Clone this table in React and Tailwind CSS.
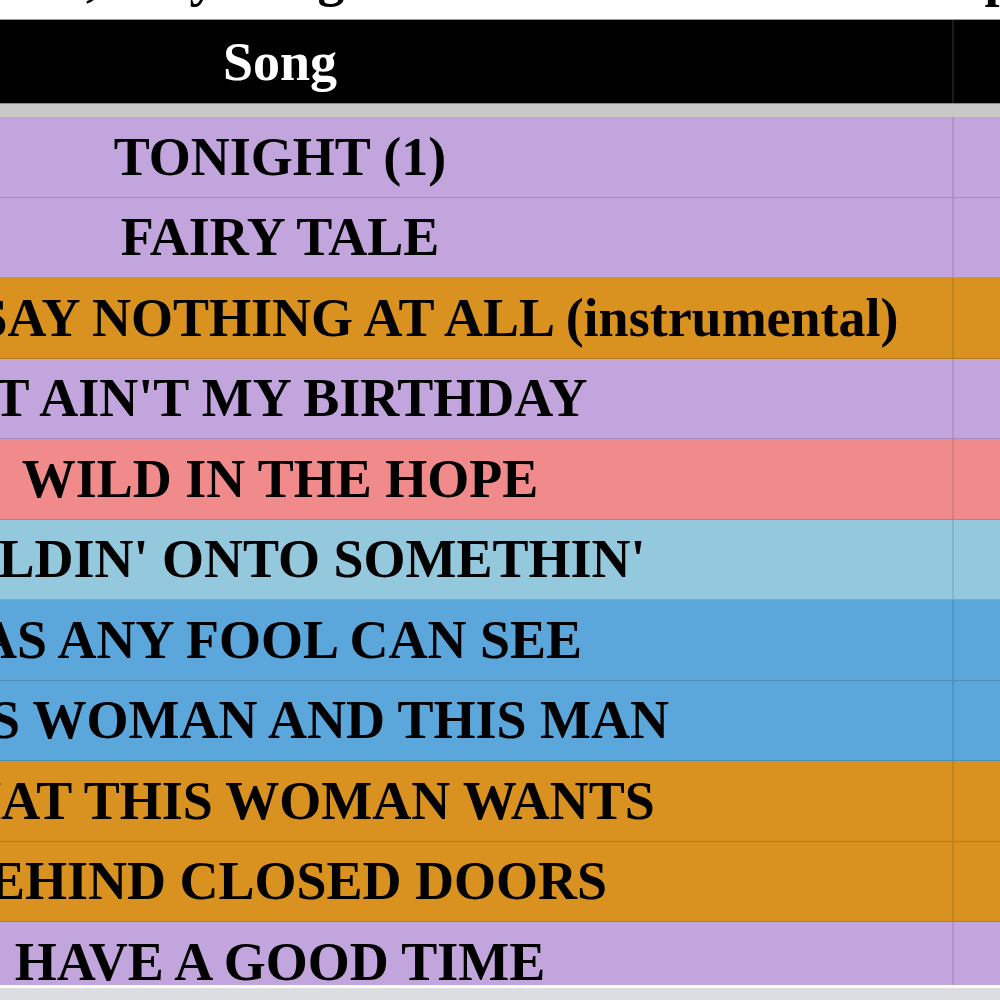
import React from "react"

const rows = [
  { title: "TONIGHT (1)", bg: "bg-[#c1a5dc]" },
  { title: "FAIRY TALE", bg: "bg-[#c1a5dc]" },
  { title: "WHEN YOU SAY NOTHING AT ALL (instrumental)", bg: "bg-[#d9921f]" },
  { title: "IT AIN'T MY BIRTHDAY", bg: "bg-[#c1a5dc]" },
  { title: "WILD IN THE HOPE", bg: "bg-[#f18b8b]" },
  { title: "HOLDIN' ONTO SOMETHIN'", bg: "bg-[#93c8dd]" },
  { title: "AS ANY FOOL CAN SEE", bg: "bg-[#5ba7dc]" },
  { title: "THIS WOMAN AND THIS MAN", bg: "bg-[#5ba7dc]" },
  { title: "WHAT THIS WOMAN WANTS", bg: "bg-[#d9921f]" },
  { title: "BEHIND CLOSED DOORS", bg: "bg-[#d9921f]" },
  { title: "HAVE A GOOD TIME", bg: "bg-[#c1a5dc]" },
]

const SongRow = ({ title, bg }) => {
  return (
    <div className={`flex h-[80.5px] shrink-0 border-b border-black/15 ${bg}`}>
      <div className="w-[1344px] shrink-0 flex items-center justify-center whitespace-nowrap text-[54px] font-bold text-black leading-none">
        {title}
      </div>
      <div className="w-[200px] shrink-0 border-l-2 border-black/10" />
    </div>
  )
}

const App = () => {
  return (
    <div className="w-[1000px] h-[1000px] overflow-hidden bg-white font-['Liberation_Serif',serif]">
      <div className="h-[985px] overflow-hidden flex flex-col">
        {/* title line, only descenders show */}
        <div className="h-[19px] shrink-0 overflow-hidden">
          <div className="flex -mt-[50px] text-[54px] font-bold leading-[54px] text-black whitespace-nowrap">
            <span className="ml-[86px]">,</span>
            <span className="ml-[90px]">y</span>
            <span className="ml-[101px]">g</span>
            <span className="ml-[640px]">p</span>
          </div>
        </div>
        <div className="ml-[-392px] flex flex-col border-t border-[#9a9a9a]">
          <div className="flex h-[83px] shrink-0 bg-black">
            <div className="w-[1344px] shrink-0 flex items-center justify-center text-[54px] font-bold text-white leading-none">
              Song
            </div>
            <div className="w-[200px] shrink-0 border-l-2 border-[#1c1c1c]" />
          </div>
          <div className="h-[14px] shrink-0 bg-[#c8c8c8] border-t border-[#8a8a8a]" />
          {rows.map((row, index) => (
            <SongRow key={index} title={row.title} bg={row.bg} />
          ))}
        </div>
      </div>
      <div className="h-[3px] bg-white" />
      <div className="h-[12px] bg-[#dcdde0]" />
    </div>
  )
}

export default App
